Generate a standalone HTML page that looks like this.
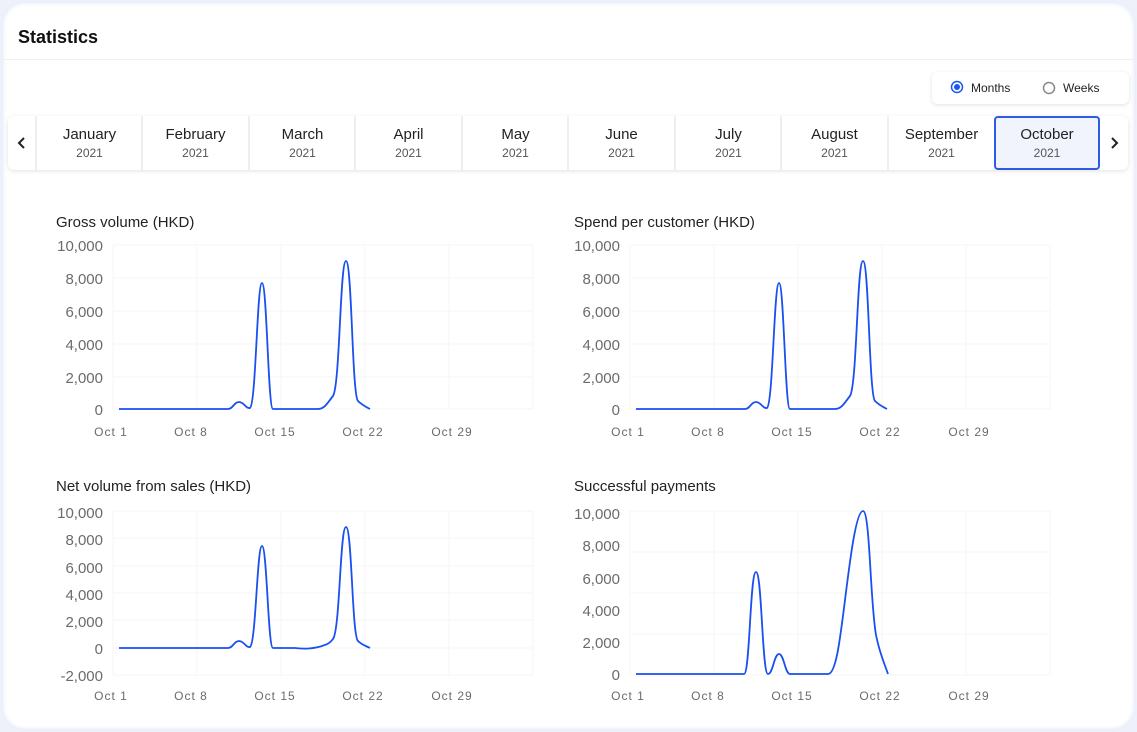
<!DOCTYPE html>
<html><head><meta charset="utf-8"><style>
html,body{margin:0;padding:0;background:#eef1fa;width:1137px;height:732px;overflow:hidden;font-family:"Liberation Sans",sans-serif;}
.card{position:absolute;left:1px;top:1px;width:1135px;height:730px;background:#fff;border-radius:24px;box-shadow:0 0 5px 2px #e4e9f8 inset;}
.inner{position:absolute;left:0;top:0;width:1137px;height:732px;}
.title{position:absolute;left:18px;top:27px;font-size:18px;font-weight:bold;color:#111;}
.hr{position:absolute;left:0;top:59px;width:1137px;height:1px;background:#eef0f3;}
.radio{position:absolute;left:932px;top:72px;width:197px;height:32px;background:#fff;border-radius:6px;box-shadow:0 1px 4px rgba(0,0,0,.12);font-size:12px;color:#222;}
.tabs{position:absolute;left:8px;top:116px;width:1120px;height:54px;background:#fff;border-radius:6px;box-shadow:0 1px 4px rgba(0,0,0,.12);}
.tab{position:absolute;top:0;height:54px;text-align:center;border-left:2px solid #eceef2;box-sizing:border-box;}
.tab .m{font-size:15px;color:#222;margin-top:10px;}
.tab .y{font-size:12px;color:#555;margin-top:3px;}
.sel{border:2px solid #2d5be3;border-radius:4px;background:#f1f4fd;}
.sel .m{margin-top:8px}
</style></head><body>
<div class="card"></div>
<div class="inner">
<div class="title">Statistics</div>
<div class="hr"></div>
<div class="radio">
<svg width="197" height="32" style="position:absolute;left:0;top:0"><circle cx="25" cy="15" r="5.5" fill="none" stroke="#1a56f0" stroke-width="1.5"/><circle cx="25" cy="15" r="3" fill="#1a56f0"/><circle cx="117" cy="16" r="5.5" fill="none" stroke="#888" stroke-width="1.5"/></svg>
<span style="position:absolute;left:39px;top:9px">Months</span>
<span style="position:absolute;left:131px;top:9px">Weeks</span>
</div>
<div class="tabs">
<svg width="28" height="54" style="position:absolute;left:0;top:0"><path d="M16,22 L11,27 L16,32" fill="none" stroke="#222" stroke-width="2"/></svg>
<div class="tab" style="left:27px;width:107px"><div class="m">January</div><div class="y">2021</div></div>
<div class="tab" style="left:133px;width:107px"><div class="m">February</div><div class="y">2021</div></div>
<div class="tab" style="left:240px;width:107px"><div class="m">March</div><div class="y">2021</div></div>
<div class="tab" style="left:346px;width:107px"><div class="m">April</div><div class="y">2021</div></div>
<div class="tab" style="left:453px;width:107px"><div class="m">May</div><div class="y">2021</div></div>
<div class="tab" style="left:559px;width:107px"><div class="m">June</div><div class="y">2021</div></div>
<div class="tab" style="left:666px;width:107px"><div class="m">July</div><div class="y">2021</div></div>
<div class="tab" style="left:772px;width:107px"><div class="m">August</div><div class="y">2021</div></div>
<div class="tab" style="left:879px;width:107px"><div class="m">September</div><div class="y">2021</div></div>
<div class="tab sel" style="left:986px;width:106px;height:54px"><div class="m">October</div><div class="y">2021</div></div>
<svg width="28" height="54" style="position:absolute;left:1092px;top:0"><path d="M12,22 L17,27 L12,32" fill="none" stroke="#222" stroke-width="2"/></svg>
</div>

<svg width="1137" height="732" style="position:absolute;left:0;top:0" font-family="Liberation Sans, sans-serif">
<g font-size="15" fill="#222">
<text x="56" y="227">Gross volume (HKD)</text>
<text x="574" y="227">Spend per customer (HKD)</text>
<text x="56" y="491">Net volume from sales (HKD)</text>
<text x="574" y="491">Successful payments</text>
</g>
<g stroke="#f4f5f7" stroke-width="1" fill="none">
<g id="g1">
<path d="M113,245H533M113,278H533M113,311H533M113,344H533M113,377H533M113,409H533"/>
<path d="M113,245V409M197,245V409M281,245V409M365,245V409M449,245V409M533,245V409"/>
</g>
<use href="#g1" transform="translate(517,0)"/>
<path d="M113,511H533M113,538H533M113,566H533M113,593H533M113,620H533M113,648H533M113,675H533"/>
<path d="M113,511V675M197,511V675M281,511V675M365,511V675M449,511V675M533,511V675"/>
<path d="M630,511H1050M630,552H1050M630,593H1050M630,634H1050M630,675H1050"/>
<path d="M630,511V675M714,511V675M798,511V675M882,511V675M966,511V675M1050,511V675"/>
</g>
<g font-size="15" fill="#6b6b6b" text-anchor="end">
<text x="103" y="251">10,000</text><text x="103" y="284">8,000</text><text x="103" y="317">6,000</text><text x="103" y="350">4,000</text><text x="103" y="383">2,000</text><text x="103" y="415">0</text>
<text x="620" y="251">10,000</text><text x="620" y="284">8,000</text><text x="620" y="317">6,000</text><text x="620" y="350">4,000</text><text x="620" y="383">2,000</text><text x="620" y="415">0</text>
<text x="103" y="518">10,000</text><text x="103" y="545">8,000</text><text x="103" y="573">6,000</text><text x="103" y="600">4,000</text><text x="103" y="627">2,000</text><text x="103" y="654">0</text><text x="103" y="681">-2,000</text>
<text x="620" y="519">10,000</text><text x="620" y="551">8,000</text><text x="620" y="584">6,000</text><text x="620" y="616">4,000</text><text x="620" y="648">2,000</text><text x="620" y="680">0</text>
</g>
<g font-size="12" fill="#6b6b6b" text-anchor="middle" letter-spacing="1">
<g id="xl"><text x="111" y="436">Oct 1</text><text x="191" y="436">Oct 8</text><text x="275" y="436">Oct 15</text><text x="363" y="436">Oct 22</text><text x="452" y="436">Oct 29</text></g>
<use href="#xl" transform="translate(517,0)"/>
<use href="#xl" transform="translate(0,264)"/>
<use href="#xl" transform="translate(517,264)"/>
</g>
<g fill="none" stroke="#1a4ff0" stroke-width="1.8">
<path id="c1" d="M119,409 L228,409 C233,409 234,402 239,402 C244,402 246,409 250,408 C256,404 257,283 262,283 C267,283 268,409 273,409 L318,409 C325,409 328,402 333,396 C340,385 340,261 346,261 C352,261 352,395 358,401 C362,405 366,407 370,409"/>
<use href="#c1" transform="translate(517,0)"/>
<path d="M119,648 L228,648 C233,648 234,641 239,641 C244,641 246,648 250,647 C256,643 257,546 262,546 C267,546 268,648 273,648 L295,648 C305,649 312,649 322,646 C328,644 330,643 333,639 C340,630 340,527 346,527 C352,527 352,636 358,641 C362,645 366,646 370,648"/>
<path d="M636,674 L744,674 C750,674 750,572 756,572 C762,572 762,674 768,674 C773,674 774,654 779,654 C784,654 785,674 790,674 L828,674 C836,674 840,640 845,600 C850,560 856,511 863,511 C870,511 870,600 876,635 C880,655 884,662 888,674"/>
</g>
</svg>
</div>
</body></html>
